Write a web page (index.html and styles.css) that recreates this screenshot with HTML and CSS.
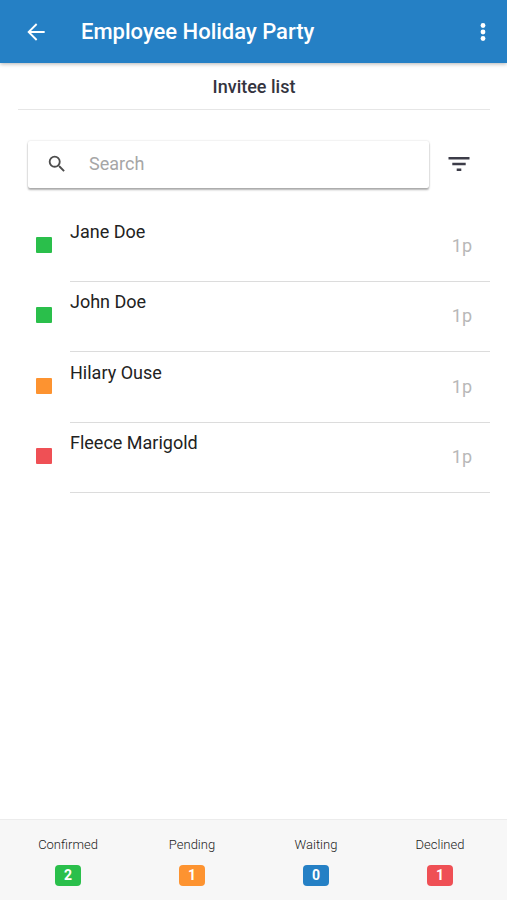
FILE: index.html
```html
<!DOCTYPE html>
<html lang="en">
<head>
  <meta charset="utf-8">
  <meta name="viewport" content="width=device-width, initial-scale=1">
  <title>Employee Holiday Party</title>
  <link rel="stylesheet" href="styles.css">
</head>
<body>
  <header class="app-bar">
    <button class="icon-button back" type="button" aria-label="Back">
      <svg width="26" height="26" viewBox="0 0 24 24" fill="currentColor"><path d="M20 11.1H7.4l5.8-5.8L12 4l-8 8 8 8 1.2-1.3-5.8-5.8H20z"/></svg>
    </button>
    <h1 class="app-title">Employee Holiday Party</h1>
    <button class="icon-button more" type="button" aria-label="More options">
      <svg width="6" height="20" viewBox="0 0 6 20" fill="currentColor"><circle cx="3" cy="3.5" r="2.4"/><circle cx="3" cy="10" r="2.4"/><circle cx="3" cy="16.5" r="2.4"/></svg>
    </button>
  </header>

  <main class="content">
    <h2 class="section-title">Invitee list</h2>

    <div class="toolbar">
      <label class="search">
        <svg width="22" height="22" viewBox="0 0 24 24" fill="currentColor" aria-hidden="true"><path d="M15.5 14h-.79l-.28-.27A6.47 6.47 0 0 0 16 9.5 6.5 6.5 0 1 0 9.5 16c1.61 0 3.09-.59 4.23-1.57l.27.28v.79l5 4.99L20.49 19l-4.99-5zm-6 0a4.5 4.5 0 1 1 0-9 4.5 4.5 0 0 1 0 9z"/></svg>
        <input class="search-input" type="text" placeholder="Search" aria-label="Search">
      </label>
      <button class="icon-button filter" type="button" aria-label="Filter">
        <svg width="22" height="14" viewBox="0 0 22 14" fill="currentColor"><path d="M.5 0h21v2.6H.5zM4.3 5.7h13.4v2.6H4.3zM8.7 11.4h4.6V14H8.7z"/></svg>
      </button>
    </div>

    <ul class="invitees">
      <li class="invitee"><span class="status confirmed"></span><div class="details"><span class="name">Jane Doe</span><span class="party">1p</span></div></li>
      <li class="invitee"><span class="status confirmed"></span><div class="details"><span class="name">John Doe</span><span class="party">1p</span></div></li>
      <li class="invitee"><span class="status pending"></span><div class="details"><span class="name">Hilary Ouse</span><span class="party">1p</span></div></li>
      <li class="invitee"><span class="status declined"></span><div class="details"><span class="name">Fleece Marigold</span><span class="party">1p</span></div></li>
    </ul>
  </main>

  <footer class="summary">
    <div class="total"><span class="total-label">Confirmed</span><span class="badge confirmed">2</span></div>
    <div class="total"><span class="total-label">Pending</span><span class="badge pending">1</span></div>
    <div class="total"><span class="total-label">Waiting</span><span class="badge waiting">0</span></div>
    <div class="total"><span class="total-label">Declined</span><span class="badge declined">1</span></div>
  </footer>
</body>
</html>
```
FILE: styles.css
```css
* {
  box-sizing: border-box;
}

body {
  display: flex;
  flex-direction: column;
  min-height: 100vh;
  margin: 0;
  background: #fff;
  color: #222;
  font-family: Roboto, "Liberation Sans", sans-serif;
  font-size: 18px;
  line-height: 24px;
}

svg {
  display: block;
  flex: none;
}

.icon-button {
  padding: 0;
  border: 0;
  background: none;
  color: inherit;
}

.app-bar {
  display: flex;
  align-items: center;
  padding: 18px 21px 18px 23px;
  background: #2580c5;
  box-shadow: 0 1px 4px rgba(0, 0, 0, 0.3);
  color: #fff;
}

.app-title {
  flex: 1;
  margin: 0 0 0 32px;
  font-size: 22px;
  font-weight: 500;
  line-height: 27px;
}

.content {
  flex: 1;
  padding: 0 17px 0 18px;
}

.section-title {
  margin: 0;
  padding: 12px 0 10px;
  border-bottom: 1px solid #e6e6e6;
  color: #34343f;
  font-size: 18px;
  font-weight: 500;
  text-align: center;
}

.toolbar {
  display: flex;
  align-items: center;
  gap: 19px;
  padding: 31px 20px 23px 10px;
}

.search {
  display: flex;
  flex: 1;
  align-items: center;
  gap: 21px;
  min-width: 0;
  height: 47px;
  padding: 0 18px 2px;
  border-radius: 2px;
  box-shadow: 0 2px 2px rgba(0, 0, 0, 0.3), 0 0 2px rgba(0, 0, 0, 0.18);
  color: #4d4d4d;
}

.search-input {
  flex: 1;
  min-width: 0;
  padding: 0;
  border: 0;
  outline: 0;
  background: none;
  color: #222;
  font: inherit;
}

.search-input::placeholder {
  color: #a6a6a6;
  opacity: 1;
}

.filter {
  padding-bottom: 2px;
  color: #3c3c48;
}

.invitees {
  margin: 0;
  padding: 0;
  list-style: none;
}

.invitee {
  display: flex;
  align-items: center;
  gap: 18px;
  padding-left: 18px;
}

.status {
  width: 16px;
  height: 16px;
  margin-bottom: 4px;
  border-radius: 1px;
}

.details {
  display: flex;
  flex: 1;
  justify-content: space-between;
  padding: 8px 18px 23px 0;
  border-bottom: 1px solid #dcdcdc;
}

.name {
  padding-bottom: 14px;
}

.party {
  padding-top: 14px;
  color: #b8b8b8;
}

.invitee:nth-child(odd) .details {
  padding-top: 9px;
}

.confirmed {
  background: #2abf4b;
}

.pending {
  background: #fd9330;
}

.waiting {
  background: #2580c5;
}

.declined {
  background: #ef5055;
}

.summary {
  display: grid;
  grid-template-columns: repeat(4, 1fr);
  padding: 16px 5px 14px 6px;
  border-top: 1px solid #ececec;
  background: #f7f7f7;
}

.total {
  display: flex;
  flex-direction: column;
  align-items: center;
  gap: 11px;
}

.total-label {
  color: #222;
  font-size: 13px;
  font-weight: 300;
  line-height: 18px;
}

.badge {
  min-width: 26px;
  padding: 0 9px;
  border-radius: 4px;
  color: #fff;
  font-size: 14px;
  font-weight: 700;
  line-height: 21px;
  text-align: center;
}
```
